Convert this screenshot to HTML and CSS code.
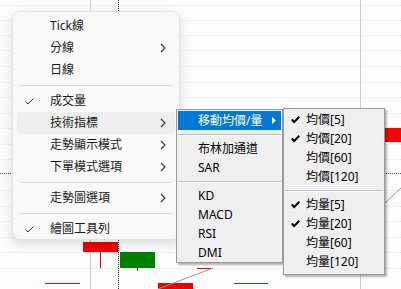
FILE: index.html
```html
<!DOCTYPE html>
<html lang="zh-Hant">
<head>
<meta charset="UTF-8">
<title>走勢圖選單</title>
<link rel="stylesheet" href="styles.css">
</head>
<body>
<div class="stage">
  <svg class="chart" width="401" height="289" viewBox="0 0 401 289">
    <g stroke="#e4e4e4" stroke-dasharray="1 1">
      <line x1="0" y1="5.5" x2="401" y2="5.5"/>
      <line x1="0" y1="20.5" x2="401" y2="20.5"/>
      <line x1="0" y1="35.5" x2="401" y2="35.5"/>
      <line x1="0" y1="50.5" x2="401" y2="50.5"/>
      <line x1="0" y1="66.5" x2="401" y2="66.5"/>
      <line x1="0" y1="82.5" x2="401" y2="82.5"/>
      <line x1="0" y1="97.5" x2="401" y2="97.5"/>
      <line x1="0" y1="113.5" x2="401" y2="113.5"/>
      <line x1="0" y1="128.5" x2="401" y2="128.5"/>
      <line x1="0" y1="144.5" x2="401" y2="144.5"/>
      <line x1="0" y1="159.5" x2="401" y2="159.5"/>
      <line x1="0" y1="190.5" x2="401" y2="190.5"/>
      <line x1="0" y1="206.5" x2="401" y2="206.5"/>
      <line x1="0" y1="221.5" x2="401" y2="221.5"/>
      <line x1="0" y1="237.5" x2="401" y2="237.5"/>
      <line x1="0" y1="252.5" x2="401" y2="252.5"/>
      <line x1="0" y1="268.5" x2="401" y2="268.5"/>
    </g>
    <line x1="90.5" y1="0" x2="90.5" y2="289" stroke="#cfcfcf"/>
    <line x1="360.5" y1="0" x2="360.5" y2="289" stroke="#cfcfcf"/>
    <rect x="385" y="128" width="16" height="14" fill="#ff0000"/>
    <line x1="385" y1="203" x2="401" y2="188" stroke="#8c9c94"/>
    <rect x="83" y="242" width="35" height="10" fill="#f00000"/>
    <line x1="100.5" y1="252" x2="100.5" y2="268" stroke="#f00000"/>
    <rect x="120" y="252" width="35" height="16" fill="#008000"/>
    <line x1="137.5" y1="268" x2="137.5" y2="271" stroke="#008000"/>
    <line x1="45" y1="283.5" x2="80" y2="283.5" stroke="#f00000"/>
    <line x1="197" y1="268.5" x2="213" y2="268.5" stroke="#f00000"/>
    <rect x="158" y="283" width="35" height="6" fill="#f00000"/>
    <line x1="158" y1="289" x2="213" y2="268" stroke="#8c9c94"/>
    <line x1="234" y1="283.5" x2="268" y2="283.5" stroke="#008000"/>
    <line x1="118.5" y1="0" x2="118.5" y2="289" stroke="#222" stroke-dasharray="1 1"/>
    <line x1="0" y1="173.5" x2="401" y2="173.5" stroke="#555" stroke-dasharray="1 1"/>
  </svg>

  <div class="menu main-menu">
    <div class="item">Tick線</div>
    <div class="item">分線<svg class="chev" width="6" height="10" viewBox="0 0 6 10"><polyline points="1,1 5,5 1,9"/></svg></div>
    <div class="item">日線</div>
    <div class="sep"></div>
    <div class="item"><svg class="tick" width="9" height="7" viewBox="0 0 9 7"><polyline points="0.5,3.5 3,6 8.5,0.5"/></svg>成交量</div>
    <div class="item hover">技術指標<svg class="chev" width="6" height="10" viewBox="0 0 6 10"><polyline points="1,1 5,5 1,9"/></svg></div>
    <div class="item">走勢顯示模式<svg class="chev" width="6" height="10" viewBox="0 0 6 10"><polyline points="1,1 5,5 1,9"/></svg></div>
    <div class="item">下單模式選項<svg class="chev" width="6" height="10" viewBox="0 0 6 10"><polyline points="1,1 5,5 1,9"/></svg></div>
    <div class="sep"></div>
    <div class="item">走勢圖選項<svg class="chev" width="6" height="10" viewBox="0 0 6 10"><polyline points="1,1 5,5 1,9"/></svg></div>
    <div class="sep"></div>
    <div class="item"><svg class="tick" width="9" height="7" viewBox="0 0 9 7"><polyline points="0.5,3.5 3,6 8.5,0.5"/></svg>繪圖工具列</div>
  </div>

  <div class="menu classic sub-one">
    <div class="row active">移動均價/量<svg class="tri" width="4" height="7" viewBox="0 0 4 7"><polygon points="0,0 4,3.5 0,7"/></svg></div>
    <div class="csep"></div>
    <div class="row">布林加通道</div>
    <div class="row">SAR</div>
    <div class="csep"></div>
    <div class="row">KD</div>
    <div class="row">MACD</div>
    <div class="row">RSI</div>
    <div class="row">DMI</div>
  </div>

  <div class="menu classic sub-two">
    <div class="row"><svg class="bold-tick" width="9" height="8" viewBox="0 0 9 8"><path d="M0 4.2 L1.4 2.8 L3.2 4.6 L7.6 0 L9 1.4 L3.2 7.4 Z"/></svg>均價[5]</div>
    <div class="row"><svg class="bold-tick" width="9" height="8" viewBox="0 0 9 8"><path d="M0 4.2 L1.4 2.8 L3.2 4.6 L7.6 0 L9 1.4 L3.2 7.4 Z"/></svg>均價[20]</div>
    <div class="row">均價[60]</div>
    <div class="row">均價[120]</div>
    <div class="csep"></div>
    <div class="row"><svg class="bold-tick" width="9" height="8" viewBox="0 0 9 8"><path d="M0 4.2 L1.4 2.8 L3.2 4.6 L7.6 0 L9 1.4 L3.2 7.4 Z"/></svg>均量[5]</div>
    <div class="row"><svg class="bold-tick" width="9" height="8" viewBox="0 0 9 8"><path d="M0 4.2 L1.4 2.8 L3.2 4.6 L7.6 0 L9 1.4 L3.2 7.4 Z"/></svg>均量[20]</div>
    <div class="row">均量[60]</div>
    <div class="row">均量[120]</div>
  </div>
</div>
</body>
</html>
```

FILE: styles.css
```css
body {
	margin: 0;
	background: #fdfdfd;
	font-family: "Noto Sans", "Noto Sans CJK TC", sans-serif;
	font-size: 12px;
	color: #1b1b1b;
}
.stage {
	width: 401px;
	height: 289px;
	position: relative;
	overflow: hidden;
	background: #fdfdfd;
}
.chart {
	display: block;
}
.menu {
	position: absolute;
	box-sizing: border-box;
}

/* 主選單 (Win11 風格) */
.main-menu {
	left: 12px;
	top: 11px;
	width: 168px;
	height: 229px;
	padding: 3px 4px;
	background: #f9f9f9;
	border: 1px solid #e3e3e3;
	border-radius: 8px;
	box-shadow: 0 4px 12px rgba(0, 0, 0, 0.14);
}
.item {
	height: 22px;
	line-height: 22px;
	padding-left: 33px;
	position: relative;
	border-radius: 4px;
}
.item.hover {
	background: #eeeeee;
}
.chev {
	position: absolute;
	right: 9px;
	top: 6px;
	fill: none;
	stroke: #333;
	stroke-width: 1.1;
}
.tick {
	position: absolute;
	left: 8px;
	top: 8px;
	fill: none;
	stroke: #333;
	stroke-width: 1;
}
.sep {
	height: 1px;
	margin: 4px 3px 4px 3px;
	background: #dcdcdc;
}

/* 子選單 (傳統風格) */
.classic {
	background: #f0f0f0;
	border: 1px solid #9a9a9a;
	box-shadow: 2px 2px 2px rgba(0, 0, 0, 0.3);
	color: #000;
}
.sub-one {
	left: 176px;
	top: 109px;
	width: 107px;
	height: 154px;
	padding: 1px 1px 0;
}
.sub-two {
	left: 283px;
	top: 108px;
	width: 102px;
	height: 167px;
	padding: 1px 1px 3px;
}
.row {
	height: 19px;
	line-height: 19px;
	position: relative;
}
.sub-one .row {
	padding-left: 20px;
}
.sub-two .row {
	padding-left: 21px;
}
.row.active {
	background: #0078d7;
	color: #fff;
}
.tri {
	position: absolute;
	right: 5px;
	top: 6px;
	fill: #fff;
}
.bold-tick {
	position: absolute;
	left: 6px;
	top: 6px;
	fill: #000;
}
.csep {
	height: 1px;
	margin: 4px 0 3px;
	background: #bcbcbc;
	border-bottom: 1px solid #fff;
}
```
